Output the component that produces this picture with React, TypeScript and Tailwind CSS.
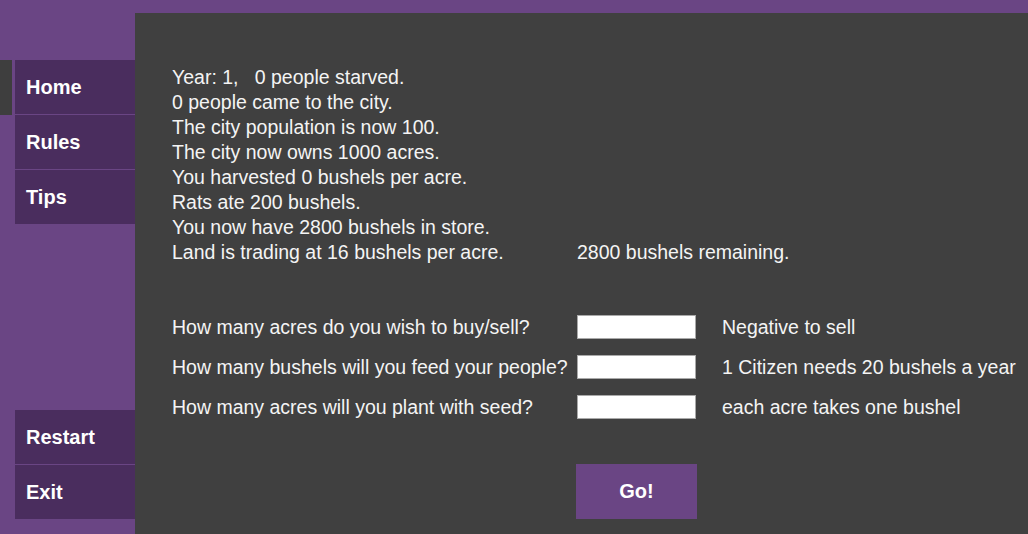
const stats = [
  "Year: 1,\u00a0\u00a0 0 people starved.",
  "0 people came to the city.",
  "The city population is now 100.",
  "The city now owns 1000 acres.",
  "You harvested 0 bushels per acre.",
  "Rats ate 200 bushels.",
  "You now have 2800 bushels in store.",
];

const questions = [
  { label: "How many acres do you wish to buy/sell?", hint: "Negative to sell" },
  { label: "How many bushels will you feed your people?", hint: "1 Citizen needs 20 bushels a year" },
  { label: "How many acres will you plant with seed?", hint: "each acre takes one bushel" },
];

function MenuItem({ label, active = false, last = false }: { label: string; active?: boolean; last?: boolean }) {
  return (
    <div className={last ? "flex h-[54px]" : "flex h-[55px]"}>
      <div className={active ? "w-[12px] bg-[#3e3e3e]" : "w-[12px]"} />
      <div
        className={
          last
            ? "ml-[3px] flex w-[120px] items-center bg-[#4a2d5e] pl-[11px] text-[20px] font-bold text-white"
            : "ml-[3px] flex w-[120px] items-center border-b border-[#6a4584] bg-[#4a2d5e] pl-[11px] text-[20px] font-bold text-white"
        }
      >
        {label}
      </div>
    </div>
  );
}

export default function App() {
  return (
    <div
      className="flex h-[534px] w-[1028px] overflow-hidden bg-[#6a4584] text-[#f4f4f4]"
      style={{ fontFamily: '"Liberation Sans", Arial, sans-serif' }}
    >
      <aside className="flex w-[135px] flex-col pt-[60px] pb-[15px]">
        <MenuItem label="Home" active />
        <MenuItem label="Rules" />
        <MenuItem label="Tips" last />
        <div className="mt-auto">
          <MenuItem label="Restart" />
          <MenuItem label="Exit" last />
        </div>
      </aside>

      <main className="mt-[13px] flex-1 bg-[#404040] pt-[52px] pl-[37px] text-[19.5px] leading-[25px]">
        {stats.map((line) => (
          <div key={line} className="whitespace-pre">
            {line}
          </div>
        ))}
        <div className="flex">
          <div className="w-[405px]">Land is trading at 16 bushels per acre.</div>
          <div>2800 bushels remaining.</div>
        </div>

        <div className="mt-[42px]">
          {questions.map((q) => (
            <div key={q.label} className="flex h-[40px] items-center">
              <div className="w-[405px]">{q.label}</div>
              <input
                type="text"
                className="h-[24px] w-[119px] border border-[#a9a9a9] bg-white outline-none"
              />
              <div className="ml-[26px]">{q.hint}</div>
            </div>
          ))}
        </div>

        <button className="mt-[37px] ml-[404px] flex h-[55px] w-[121px] items-center justify-center bg-[#6a4584] text-[20px] font-bold text-white">
          Go!
        </button>
      </main>
    </div>
  );
}
